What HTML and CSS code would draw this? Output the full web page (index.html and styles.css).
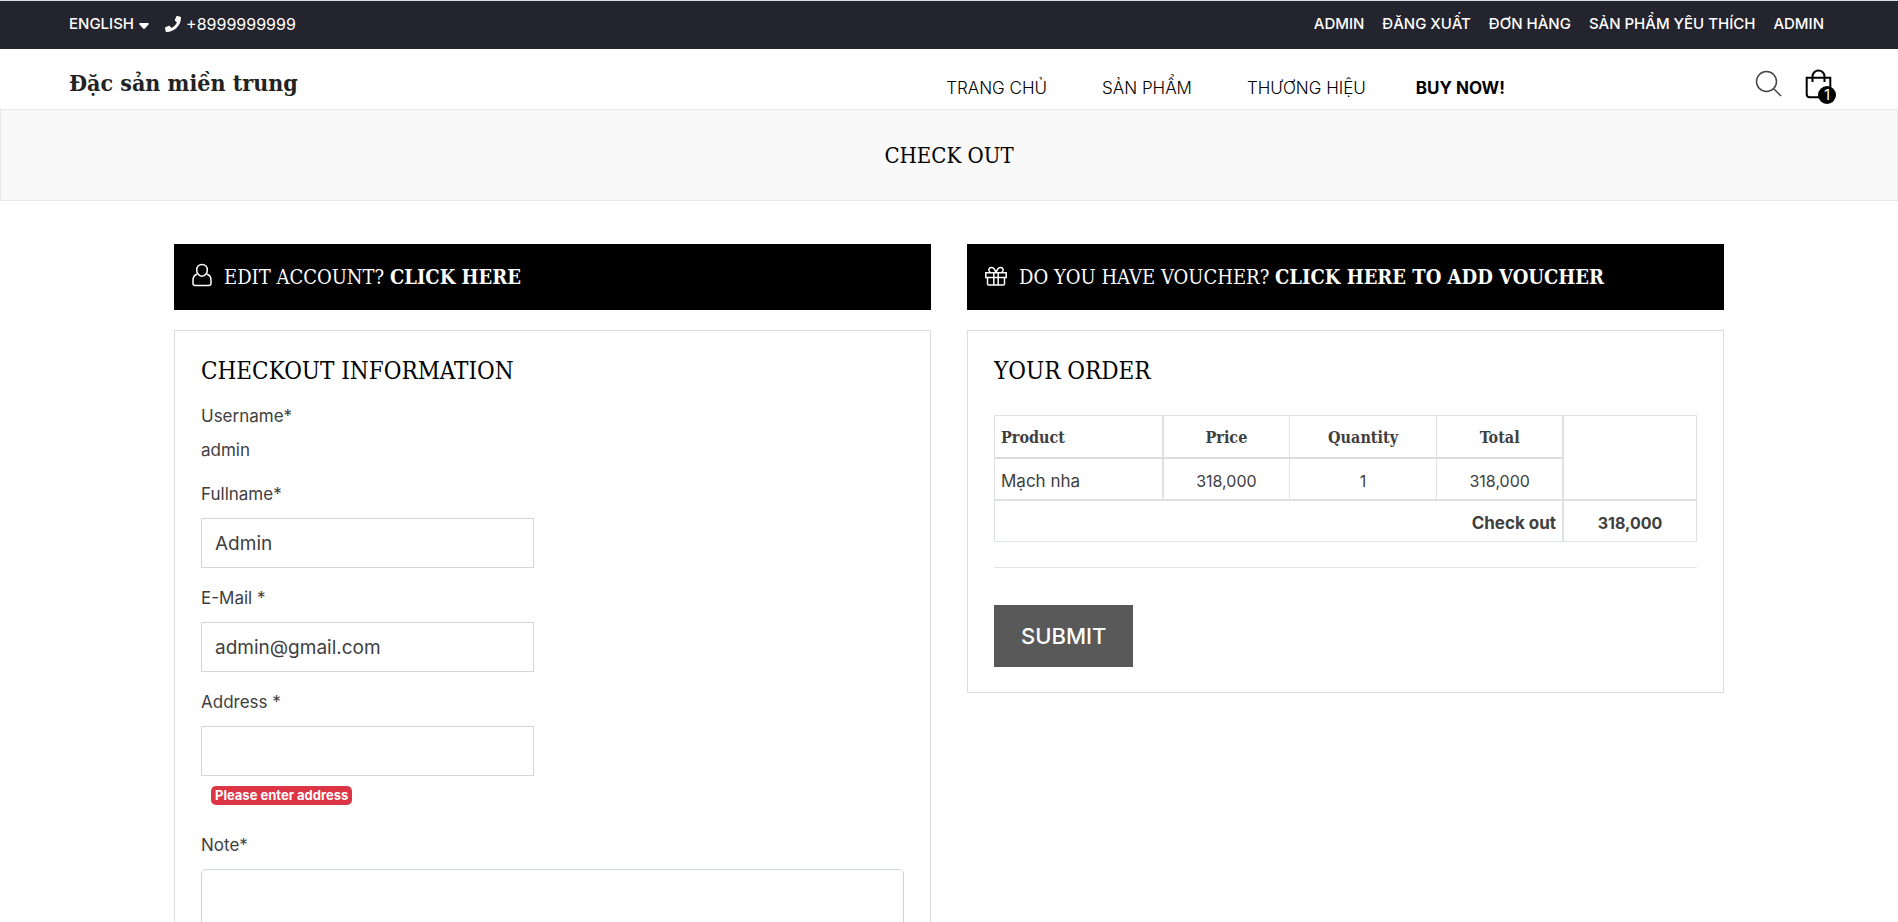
FILE: index.html
```html
<!DOCTYPE html>
<html lang="vi">
<head>
<meta charset="utf-8">
<meta name="viewport" content="width=device-width, initial-scale=1">
<title>Check out - Đặc sản miền trung</title>
<link rel="stylesheet" href="styles.css">
</head>
<body>
<div class="topbar">
  <div class="topbar-group">
    <button class="language" type="button">ENGLISH
      <svg class="caret" viewBox="0 0 10 6" aria-hidden="true"><path d="M1.2 0h7.6c.9 0 1.3 1 .7 1.600L5.900 5.500a1.200 1.200 0 0 1-1.800 0L.5 1.600C-.1 1 .3 0 1.200 0z"/></svg>
    </button>
    <a class="phone" href="tel:+8999999999">
      <svg class="phone-icon" viewBox="0 0 512 512" aria-hidden="true"><path d="M493.4 24.6l-104-24c-11.300-2.600-22.900 3.300-27.500 13.900l-48 112c-4.200 9.800-1.400 21.300 6.900 28l60.600 49.600c-36 76.700-98.900 140.500-177.200 177.200l-49.600-60.600c-6.800-8.300-18.200-11.100-28-6.900l-112 48C3.900 366.500-2 378.100.6 389.400l24 104C27.100 504.200 36.700 512 48 512c256.100 0 464-207.500 464-464 0-11.200-7.700-20.900-18.600-23.400z"/></svg>
      +8999999999</a>
  </div>
  <nav class="topbar-links" aria-label="Account">
    <a href="#">ADMIN</a>
    <a href="#">ĐĂNG XUẤT</a>
    <a href="#">ĐƠN HÀNG</a>
    <a href="#">SẢN PHẨM YÊU THÍCH</a>
    <a href="#">ADMIN</a>
  </nav>
</div>

<header class="header">
  <a class="brand" href="#">Đặc sản miền trung</a>
  <nav class="menu" aria-label="Main">
    <a href="#">TRANG CHỦ</a>
    <a href="#">SẢN PHẨM</a>
    <a href="#">THƯƠNG HIỆU</a>
    <a class="menu-buy" href="#">BUY NOW!</a>
  </nav>
  <div class="tools">
    <button class="tool" type="button" aria-label="Search">
      <svg width="28" height="30" viewBox="0 0 28 30" aria-hidden="true"><circle cx="11.500" cy="12.500" r="10"/><path d="M18.500 19.500l7.500 7.500"/></svg>
    </button>
    <a class="tool cart" href="#" aria-label="Cart">
      <svg width="31" height="30" viewBox="0 0 31 30" aria-hidden="true"><path d="M1.700 8.700h23.600v16.600a3 3 0 0 1-3 3H4.700a3 3 0 0 1-3-3z"/><path d="M7.500 13V7.500a6 6 0 0 1 12 0V13"/></svg>
      <span class="cart-count">1</span>
    </a>
  </div>
</header>

<section class="banner">
  <h1 class="banner-title">CHECK OUT</h1>
</section>

<main class="checkout">
  <section class="column">
    <div class="notice">
      <svg width="20" height="28" viewBox="0 0 20 28" aria-hidden="true"><path d="M10 1.500c3.200 0 5.300 2.400 5.300 5.600S13.200 13.200 10 13.200 4.700 10.300 4.700 7.100 6.800 1.500 10 1.500z"/><path d="M5 11.300C2.300 11.900 1 14.300 1 17.500v2.700c0 1.300 1 2.300 2.300 2.300h13.400c1.300 0 2.300-1 2.300-2.300v-2.700c0-3.200-1.300-5.600-4-6.200"/></svg>
      <p class="notice-text">EDIT ACCOUNT? <a href="#">CLICK HERE</a></p>
    </div>
    <form class="panel" id="checkout-form">
      <h2 class="panel-title">CHECKOUT INFORMATION</h2>
      <div class="info">
        <span>Username*</span>
        <span>admin</span>
      </div>
      <div class="field">
        <label for="fullname">Fullname*</label>
        <input id="fullname" type="text" value="Admin">
      </div>
      <div class="field">
        <label for="email">E-Mail *</label>
        <input id="email" type="text" value="admin@gmail.com">
      </div>
      <div class="field">
        <label for="address">Address *</label>
        <input id="address" type="text" aria-describedby="address-error">
        <span class="error" id="address-error">Please enter address</span>
      </div>
      <div class="field">
        <label for="note">Note*</label>
        <textarea id="note" rows="4"></textarea>
      </div>
    </form>
  </section>

  <section class="column">
    <div class="notice">
      <svg width="22" height="24" viewBox="0 0 22 24" aria-hidden="true"><path d="M.8 7.800h20.400v4.700H.8zM2.500 12.500v6.200c0 .8.500 1.300 1.300 1.300h14.400c.8 0 1.300-.5 1.300-1.300v-6.200M8.800 7.800V20M13.200 7.800V20"/><path d="M11 7.800C10.200 5 8.800 2.500 6.500 2.500 4.300 2.500 3.500 4.300 4 5.600c.3 1 1 1.700 1.800 2.200M11 7.800c.8-2.800 2.200-5.300 4.500-5.300 2.200 0 3 1.800 2.500 3.100-.3 1-1 1.700-1.800 2.200"/></svg>
      <p class="notice-text">DO YOU HAVE VOUCHER? <a href="#">CLICK HERE TO ADD VOUCHER</a></p>
    </div>
    <div class="panel">
      <h2 class="panel-title">YOUR ORDER</h2>
      <table class="order">
        <colgroup><col class="col-product"><col class="col-price"><col class="col-quantity"><col class="col-price"><col></colgroup>
        <tbody>
          <tr><th class="left" scope="col">Product</th><th scope="col">Price</th><th scope="col">Quantity</th><th scope="col">Total</th><td class="blank" rowspan="2"></td></tr>
          <tr><td class="left">Mạch nha</td><td>318,000</td><td>1</td><td>318,000</td></tr>
          <tr class="sum"><td class="right" colspan="4">Check out</td><td>318,000</td></tr>
        </tbody>
      </table>
      <hr class="divider">
      <button class="submit" type="submit" form="checkout-form">SUBMIT</button>
    </div>
  </section>
</main>
</body>
</html>
```
FILE: styles.css
```css
:root {
  --sans: Inter, "Noto Sans", sans-serif;
  --slab: "DejaVu Serif Condensed", "DejaVu Serif", serif;
  --ink: #404040;
  --line: #dcdcde;
}

* { box-sizing: border-box; }

body {
  margin: 0;
  background: #fff;
  color: var(--ink);
  font: 400 17px/24px var(--sans);
}

a { color: inherit; text-decoration: none; }

button {
  border: 0;
  padding: 0;
  background: none;
  color: inherit;
  font: inherit;
  cursor: pointer;
}

svg { flex: none; }

.topbar {
  display: flex;
  justify-content: space-between;
  border-top: 1px solid #dbe3e3;
  padding: 11px 74px 13px 69px;
  background: #24242e;
  color: #fff;
  font-size: 15px;
  font-weight: 500;
}

.topbar-group { display: flex; gap: 16px; }
.topbar-links { display: flex; gap: 18px; }
.language, .phone { display: flex; align-items: center; gap: 5px; }
.phone { font-size: 16px; font-weight: 400; }
.caret { width: 10px; height: 6px; margin-top: 4px; fill: #fff; }
.phone-icon { width: 16px; height: 16px; fill: #fff; }

.header {
  display: flex;
  align-items: center;
  height: 60px;
  padding: 0 62px 0 69px;
  color: #000;
}

.brand {
  flex: 1;
  padding-top: 8px;
  color: #222;
  font: 700 23px/32px var(--slab);
}

.menu { display: flex; gap: 55px; padding-top: 18px; font-weight: 300; }
.menu .menu-buy { margin-left: -5px; font-weight: 700; }

.tools {
  display: flex;
  flex: 0 0 331px;
  justify-content: flex-end;
  gap: 22px;
  padding-top: 10px;
}

.tool { position: relative; display: flex; }
.tool svg { fill: none; stroke: #000; stroke-width: 2; }
button.tool svg { stroke: #444; stroke-width: 1.500; }

.cart-count {
  position: absolute;
  right: 0;
  bottom: -5px;
  width: 18px;
  height: 18px;
  border-radius: 50%;
  background: #000;
  color: #fff;
  font-size: 15px;
  line-height: 18px;
  text-align: center;
}

.banner {
  border: 1px solid #e8e8e8;
  padding: 29px 0 28px;
  background: #f9f9f9;
  text-align: center;
}

.banner-title {
  margin: 0;
  color: #000;
  font: 400 22px/33px var(--slab);
}

.checkout {
  display: grid;
  grid-template-columns: 1fr 1fr;
  gap: 36px;
  align-items: start;
  max-width: 1550px;
  margin: 0 auto;
  padding: 43px 0;
}

.column { display: grid; gap: 20px; }

.notice {
  display: flex;
  align-items: center;
  gap: 12px;
  padding: 17px 18px;
  background: #000;
  color: #fff;
  font: 400 20px/32px var(--slab);
}

.notice svg { fill: none; stroke: #fff; stroke-width: 1.500; }
.notice-text { margin: 0; }
.notice-text a { font-weight: 700; }

.panel {
  border: 1px solid var(--line);
  padding: 24px 26px 25px;
}

.panel-title {
  margin: 0;
  color: #000;
  font: 400 24px/32px var(--slab);
}

.info { display: grid; gap: 10px; padding: 17px 0 20px; }

.field { display: grid; gap: 12px; justify-items: start; margin-bottom: 18px; }

.field input {
  width: 333px;
  height: 50px;
  border: 1px solid #d5d6d8;
  padding: 0 13px;
  background: #fff;
  color: var(--ink);
  font: 400 19px/24px var(--sans);
}

.field textarea {
  width: 100%;
  border: 1px solid #ced4da;
  border-radius: 5px;
  padding: 12px;
  font: inherit;
}

.error {
  margin: -2px 10px 10px;
  border-radius: 5px;
  padding: 0 4px;
  background: #dc3545;
  color: #fff;
  font-size: 13px;
  font-weight: 700;
  line-height: 19px;
}

.order {
  width: 100%;
  margin-top: 28px;
  border-collapse: collapse;
  table-layout: fixed;
  font-size: 16px;
  text-align: center;
}

.col-product { width: 24%; }
.col-price { width: 18%; }
.col-quantity { width: 21%; }

.order th, .order td {
  height: 42px;
  border: 1px solid #dee2e6;
  padding: 4px 6px 0;
}

.order th { border-bottom: 2px solid #dcdcdc; font: 700 16px/24px var(--slab); }
.order .left { border-right: 2px solid #dee2e6; text-align: left; }
.order .blank { border-left: 2px solid #dee2e6; }
.order .sum td { border-top: 2px solid #dee2e6; font-weight: 700; }
.order .sum .right { border-right: 2px solid #dee2e6; text-align: right; }
.order td.left, .order td.right { font-size: 17px; }

.divider { height: 1px; margin: 25px 0 37px; border: 0; background: #e5e5e5; }

.submit {
  padding: 16px 27px;
  background: #595959;
  color: #fff;
  font-size: 22px;
  font-weight: 500;
  line-height: 30px;
}
```
